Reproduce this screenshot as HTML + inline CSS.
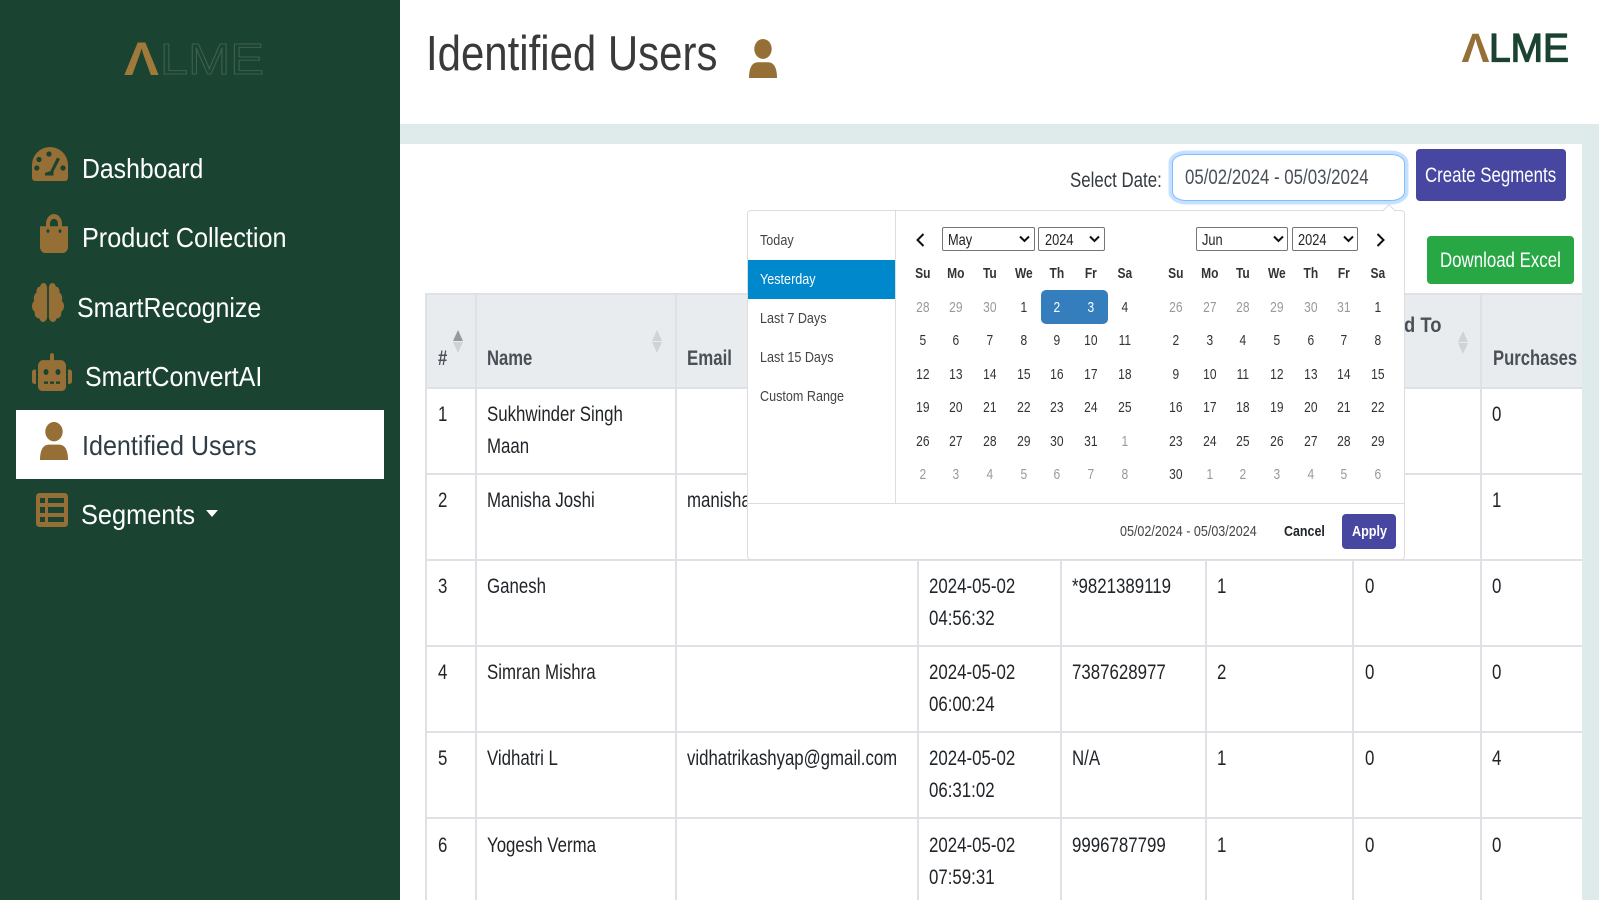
<!DOCTYPE html>
<html><head><meta charset="utf-8"><title>Identified Users</title>
<style>
html,body{margin:0;padding:0;background:#fff;width:1600px;height:900px;overflow:hidden}
body{position:relative;font-family:"Liberation Sans",sans-serif}
.a{position:absolute}
.t{position:absolute;white-space:nowrap;transform-origin:0 0;transform:scaleX(.79);font-size:21.33px;line-height:21.33px;color:#212529}
.h{font-weight:bold;color:#495057;transform:scaleX(.78)}
.s{font-size:28px;line-height:28px;color:#fff;font-weight:normal}
.r{font-size:15px;line-height:15px;color:#444;transform:scaleX(.84)}
.l{background:#dee2e6;position:absolute}
.cal{position:absolute;display:grid;grid-template-columns:repeat(7,33.7px);grid-auto-rows:33.5px;font-size:15px;line-height:33.5px;color:#333;text-align:center}
.cal span{display:block;transform:scaleX(.8)}
.cal b{display:block;transform:scaleX(.8);color:#333}
.cal .o{color:#999}
.cal .w{color:#fff}
.sel{position:absolute;box-sizing:border-box;background:#fff;border:1px solid #767676;border-radius:2px;height:24px;top:227px}
svg{position:absolute;display:block}
</style></head><body>

<!-- sidebar -->
<div class="a" style="left:0;top:0;width:400px;height:900px;background:#1b4332"></div>
<svg style="left:120px;top:36px" width="150" height="44" viewBox="0 0 150 44">
<text x="4" y="39" font-family="Liberation Sans" font-size="47" font-weight="bold" fill="#a07a3a" textLength="35" lengthAdjust="spacingAndGlyphs">Λ</text>
<text x="40" y="38" font-family="Liberation Sans" font-size="44" fill="none" stroke="#3d5f50" stroke-width="1" textLength="104" lengthAdjust="spacingAndGlyphs">LME</text>
</svg>

<svg style="left:32px;top:147px" width="36" height="34" viewBox="0 0 36 34"><path fill="#956f35" d="M0 18A18 18 0 0 1 36 18V30Q36 34 33 34H3Q0 34 0 30Z"/><g fill="#1b4332"><circle cx="17" cy="7" r="2.600"/><circle cx="7" cy="12.500" r="2.600"/><circle cx="4.800" cy="21" r="2.600"/><circle cx="31" cy="21" r="2.600"/><path d="M25 10.500L28 12L21.500 24.500V28.500H13V26L18.500 24Z"/></g></svg>
<svg style="left:40px;top:214px" width="28" height="39" viewBox="0 0 448 512" preserveAspectRatio="none"><path fill="#956f35" d="M352 160v-32C352 57.42 294.579 0 224 0 153.42 0 96 57.42 96 128v32H0v272c0 44.183 35.817 80 80 80h288c44.183 0 80-35.817 80-80V160h-96zm-192-32c0-35.29 28.71-64 64-64s64 28.71 64 64v32H160v-32zm160 120c-13.255 0-24-10.745-24-24s10.745-24 24-24 24 10.745 24 24-10.745 24-24 24zm-192 0c-13.255 0-24-10.745-24-24s10.745-24 24-24 24 10.745 24 24-10.745 24-24 24z"/></svg>
<svg style="left:32px;top:283px" width="32" height="39" viewBox="0 0 576 512" preserveAspectRatio="none"><path fill="#956f35" d="M208 0c-29.9 0-54.7 20.5-61.8 48.2-.8 0-1.4-.2-2.2-.2-35.3 0-64 28.7-64 64 0 4.8.6 9.5 1.7 14C52.5 138 32 166.6 32 200c0 12.6 3.2 24.3 8.3 34.9C16.3 248.7 0 274.3 0 304c0 33.3 20.4 61.9 49.4 73.9-.9 4.6-1.4 9.3-1.4 14.1 0 39.8 32.2 72 72 72 4.1 0 8.1-.5 12-1.2 9.6 28.5 36.2 49.2 68 49.2 39.8 0 72-32.2 72-72V64c0-35.3-28.7-64-64-64zm368 304c0-29.7-16.3-55.3-40.3-69.1 5.2-10.6 8.3-22.3 8.3-34.9 0-33.4-20.5-62-49.7-74 1-4.5 1.7-9.2 1.7-14 0-35.3-28.7-64-64-64-.8 0-1.5.2-2.2.2C422.7 20.5 397.9 0 368 0c-35.3 0-64 28.6-64 64v376c0 39.8 32.2 72 72 72 31.8 0 58.4-20.7 68-49.2 3.9.7 7.9 1.2 12 1.2 39.8 0 72-32.2 72-72 0-4.8-.5-9.5-1.4-14.1 29-12 49.4-40.6 49.4-73.9z"/></svg>
<svg style="left:32px;top:353px" width="40" height="38" viewBox="0 0 640 512" preserveAspectRatio="none"><path fill="#956f35" d="M32,224H64V416H32A31.96166,31.96166,0,0,1,0,384V256A31.96166,31.96166,0,0,1,32,224Zm512-48V448a64.06328,64.06328,0,0,1-64,64H160a64.06328,64.06328,0,0,1-64-64V176a79.974,79.974,0,0,1,80-80H288V32a32,32,0,0,1,64,0V96H464A79.974,79.974,0,0,1,544,176ZM264,256a40,40,0,1,0-40,40A39.997,39.997,0,0,0,264,256Zm-8,128H192v32h64Zm96,0H288v32h64ZM456,256a40,40,0,1,0-40,40A39.997,39.997,0,0,0,456,256Zm-8,128H384v32h64ZM640,256V384a31.96166,31.96166,0,0,1-32,32H576V224h32A31.96166,31.96166,0,0,1,640,256Z"/></svg>

<div class="a" style="left:16px;top:409.5px;width:368px;height:69.5px;background:#fff"></div>
<svg style="left:40px;top:422px" width="28" height="38" viewBox="0 0 28 38"><ellipse cx="14" cy="9.7" rx="8.7" ry="9.7" fill="#956f35"/><path fill="#956f35" d="M0 38C0 30 2 22.6 9 22.6H19C26 22.6 28 30 28 38Z"/></svg>
<svg style="left:36px;top:493px" width="32" height="34" viewBox="0 0 32 34"><path fill="#956f35" fill-rule="evenodd" d="M3.5 0H28.500A3.500 3.500 0 0 1 32 3.500V30.500A3.500 3.500 0 0 1 28.500 34H3.500A3.500 3.500 0 0 1 0 30.500V3.500A3.500 3.500 0 0 1 3.500 0ZM4 5V10H9V5ZM12 5V10H28V5ZM4 14V20H9V14ZM12 14V20H28V14ZM4 24V29H9V24ZM12 24V29H28V24Z"/></svg>

<div class="t s" style="left:82px;top:154.500px;transform:scaleX(.885)">Dashboard</div>
<div class="t s" style="left:82px;top:224px;transform:scaleX(.9)">Product Collection</div>
<div class="t s" style="left:77px;top:293.500px;transform:scaleX(.89)">SmartRecognize</div>
<div class="t s" style="left:85px;top:363px;transform:scaleX(.89)">SmartConvertAI</div>
<div class="t s" style="left:82px;top:431.500px;transform:scaleX(.897);color:#2f3e46">Identified Users</div>
<div class="t s" style="left:81px;top:500.500px;transform:scaleX(.905)">Segments</div>
<svg style="left:206px;top:510px" width="12" height="7" viewBox="0 0 12 7"><path fill="#fff" d="M0 0H12L6 7Z"/></svg>

<!-- header -->
<div class="t" style="left:426px;top:30px;font-size:49px;line-height:49px;color:#3a3a3a;transform:scaleX(.856)">Identified Users</div>
<svg style="left:749px;top:38.500px" width="28" height="39" viewBox="0 0 28 38" preserveAspectRatio="none"><ellipse cx="14" cy="9.7" rx="8.700" ry="9.700" fill="#956f35"/><path fill="#956f35" d="M0 38C0 30 2 22.600 9 22.600H19C26 22.600 28 30 28 38Z"/></svg>
<svg style="left:1460px;top:28px" width="122" height="38" viewBox="0 0 122 38">
<text x="1.500" y="34" font-family="Liberation Sans" font-size="41" font-weight="bold" fill="#956f35" textLength="28" lengthAdjust="spacingAndGlyphs">Λ</text>
<text x="29" y="33.500" font-family="Liberation Sans" font-size="40" fill="#1b4332" stroke="#1b4332" stroke-width="1.300" textLength="80" lengthAdjust="spacingAndGlyphs">LME</text>
</svg>

<!-- background bands -->
<div class="a" style="left:400px;top:124px;width:1199px;height:20px;background:#deebea"></div>
<div class="a" style="left:1582px;top:124px;width:17px;height:776px;background:#deebea"></div>

<!-- toolbar -->
<div class="t" style="left:1070px;top:170px;color:#343a40">Select Date:</div>
<div class="a" style="left:1172px;top:154px;width:233px;height:47px;box-sizing:border-box;border:1px solid #80bdff;border-radius:14px/9px;box-shadow:0 0 0 3.500px #c6e1ff;background:#fff"></div>
<div class="t" style="left:1185px;top:167px;color:#495057">05/02/2024 - 05/03/2024</div>
<div class="a" style="left:1415.500px;top:149px;width:150px;height:52px;background:#4747a1;border-radius:4px"></div>
<div class="t" style="left:1425px;top:165px;color:#fff">Create Segments</div>
<div class="a" style="left:1426.500px;top:236px;width:147.500px;height:47.500px;background:#28a745;border-radius:4px"></div>
<div class="t" style="left:1439.500px;top:250px;color:#fff">Download Excel</div>

<!-- table -->
<div class="a" style="left:425px;top:293px;width:1157px;height:95px;background:#e9ecef"></div>
<div class="l" style="left:425px;top:293px;width:1157px;height:2px"></div>
<div class="l" style="left:425px;top:386.500px;width:1157px;height:2px"></div>
<div class="l" style="left:425px;top:472.500px;width:1157px;height:2px"></div>
<div class="l" style="left:425px;top:558.500px;width:1157px;height:2px"></div>
<div class="l" style="left:425px;top:644.500px;width:1157px;height:2px"></div>
<div class="l" style="left:425px;top:730.500px;width:1157px;height:2px"></div>
<div class="l" style="left:425px;top:816.500px;width:1157px;height:2px"></div>
<div class="l" style="left:425px;top:293px;width:2px;height:607px"></div>
<div class="l" style="left:475px;top:293px;width:2px;height:607px"></div>
<div class="l" style="left:675px;top:293px;width:2px;height:607px"></div>
<div class="l" style="left:917px;top:293px;width:2px;height:607px"></div>
<div class="l" style="left:1060px;top:293px;width:2px;height:607px"></div>
<div class="l" style="left:1205px;top:293px;width:2px;height:607px"></div>
<div class="l" style="left:1352px;top:293px;width:2px;height:607px"></div>
<div class="l" style="left:1480px;top:293px;width:2px;height:607px"></div>

<svg style="left:453px;top:330px" width="10" height="23" viewBox="0 0 10 23"><path fill="#95989c" d="M5 0L10 11H0Z"/><path fill="#cfd2d6" d="M0 12H10L5 23Z"/></svg>
<svg style="left:652px;top:330px" width="10" height="23" viewBox="0 0 10 23"><path fill="#cfd2d6" d="M5 0L10 11H0Z"/><path fill="#cfd2d6" d="M0 12H10L5 23Z"/></svg>
<svg style="left:1458px;top:331px" width="10" height="23" viewBox="0 0 10 23"><path fill="#cfd2d6" d="M5 0L10 11H0Z"/><path fill="#cfd2d6" d="M0 12H10L5 23Z"/></svg>

<div class="t h" style="left:438px;top:348px">#</div>
<div class="t h" style="left:487px;top:348px">Name</div>
<div class="t h" style="left:687px;top:348px;transform:scaleX(.79)">Email</div>
<div class="t h" style="right:159px;top:315px;transform-origin:100% 0;transform:scaleX(.86)">Assigned To</div>
<div class="t h" style="left:1493px;top:348px">Purchases</div>

<div class="t" style="left:438px;top:404px">1</div>
<div class="t" style="left:487px;top:404px">Sukhwinder Singh</div>
<div class="t" style="left:487px;top:436px">Maan</div>
<div class="t" style="left:1492px;top:404px">0</div>

<div class="t" style="left:438px;top:490px">2</div>
<div class="t" style="left:487px;top:490px">Manisha Joshi</div>
<div class="t" style="left:687px;top:490px">manisha</div>
<div class="t" style="left:1492px;top:490px">1</div>

<div class="t" style="left:438px;top:576px">3</div>
<div class="t" style="left:487px;top:576px">Ganesh</div>
<div class="t" style="left:929px;top:576px">2024-05-02</div>
<div class="t" style="left:929px;top:608px">04:56:32</div>
<div class="t" style="left:1072px;top:576px">*9821389119</div>
<div class="t" style="left:1217px;top:576px">1</div>
<div class="t" style="left:1365px;top:576px">0</div>
<div class="t" style="left:1492px;top:576px">0</div>

<div class="t" style="left:438px;top:662px">4</div>
<div class="t" style="left:487px;top:662px">Simran Mishra</div>
<div class="t" style="left:929px;top:662px">2024-05-02</div>
<div class="t" style="left:929px;top:694px">06:00:24</div>
<div class="t" style="left:1072px;top:662px">7387628977</div>
<div class="t" style="left:1217px;top:662px">2</div>
<div class="t" style="left:1365px;top:662px">0</div>
<div class="t" style="left:1492px;top:662px">0</div>

<div class="t" style="left:438px;top:748px">5</div>
<div class="t" style="left:487px;top:748px">Vidhatri L</div>
<div class="t" style="left:687px;top:748px;transform:scaleX(.787)">vidhatrikashyap@gmail.com</div>
<div class="t" style="left:929px;top:748px">2024-05-02</div>
<div class="t" style="left:929px;top:780px">06:31:02</div>
<div class="t" style="left:1072px;top:748px">N/A</div>
<div class="t" style="left:1217px;top:748px">1</div>
<div class="t" style="left:1365px;top:748px">0</div>
<div class="t" style="left:1492px;top:748px">4</div>

<div class="t" style="left:438px;top:835px">6</div>
<div class="t" style="left:487px;top:835px">Yogesh Verma</div>
<div class="t" style="left:929px;top:835px">2024-05-02</div>
<div class="t" style="left:929px;top:867px">07:59:31</div>
<div class="t" style="left:1072px;top:835px">9996787799</div>
<div class="t" style="left:1217px;top:835px">1</div>
<div class="t" style="left:1365px;top:835px">0</div>
<div class="t" style="left:1492px;top:835px">0</div>

<!-- date picker -->
<div class="a" style="left:747px;top:210px;width:658px;height:349.500px;box-sizing:border-box;background:#fff;border:1px solid #ddd;border-radius:4px"></div>
<div class="a" style="left:1384px;top:206px;width:9px;height:9px;background:#fff;border-left:1px solid #ddd;border-top:1px solid #ddd;transform:rotate(45deg)"></div>
<div class="a" style="left:895px;top:211px;width:1px;height:292px;background:#ddd"></div>
<div class="a" style="left:748px;top:503px;width:656px;height:1px;background:#ddd"></div>
<div class="a" style="left:748px;top:260px;width:147px;height:39px;background:#0088cc"></div>

<div class="t r" style="left:760px;top:233px">Today</div>
<div class="t r" style="left:760px;top:272px;color:#fff">Yesterday</div>
<div class="t r" style="left:760px;top:311px">Last 7 Days</div>
<div class="t r" style="left:760px;top:350px">Last 15 Days</div>
<div class="t r" style="left:760px;top:388.500px">Custom Range</div>

<svg style="left:914px;top:232px" width="12" height="16" viewBox="0 0 12 16"><path d="M9.500 2L3.500 8L9.500 14" fill="none" stroke="#111" stroke-width="2"/></svg>
<svg style="left:1375px;top:232px" width="12" height="16" viewBox="0 0 12 16"><path d="M2.500 2L8.500 8L2.500 14" fill="none" stroke="#111" stroke-width="2"/></svg>

<div class="sel" style="left:942px;width:93px"></div>
<div class="sel" style="left:1038px;width:67px"></div>
<div class="sel" style="left:1196px;width:92px"></div>
<div class="sel" style="left:1291.500px;width:66.500px"></div>
<div class="t" style="left:948px;top:233px;font-size:16px;line-height:16px;color:#222;transform:scaleX(.8)">May</div>
<div class="t" style="left:1044.500px;top:233px;font-size:16px;line-height:16px;color:#222;transform:scaleX(.8)">2024</div>
<div class="t" style="left:1201.500px;top:233px;font-size:16px;line-height:16px;color:#222;transform:scaleX(.8)">Jun</div>
<div class="t" style="left:1298px;top:233px;font-size:16px;line-height:16px;color:#222;transform:scaleX(.8)">2024</div>
<svg style="left:1019px;top:235px" width="11" height="8" viewBox="0 0 11 8"><path d="M1 1.500L5.500 6L10 1.500" fill="none" stroke="#111" stroke-width="2"/></svg>
<svg style="left:1089px;top:235px" width="11" height="8" viewBox="0 0 11 8"><path d="M1 1.500L5.500 6L10 1.500" fill="none" stroke="#111" stroke-width="2"/></svg>
<svg style="left:1273px;top:235px" width="11" height="8" viewBox="0 0 11 8"><path d="M1 1.500L5.500 6L10 1.500" fill="none" stroke="#111" stroke-width="2"/></svg>
<svg style="left:1343px;top:235px" width="11" height="8" viewBox="0 0 11 8"><path d="M1 1.500L5.500 6L10 1.500" fill="none" stroke="#111" stroke-width="2"/></svg>

<div class="a" style="left:1040.500px;top:290.300px;width:67.500px;height:33.500px;background:#357ebd;border-radius:5px"></div>

<div class="cal" style="left:905.500px;top:257.200px">
<b>Su</b><b>Mo</b><b>Tu</b><b>We</b><b>Th</b><b>Fr</b><b>Sa</b>
<span class="o">28</span><span class="o">29</span><span class="o">30</span><span>1</span><span class="w">2</span><span class="w">3</span><span>4</span>
<span>5</span><span>6</span><span>7</span><span>8</span><span>9</span><span>10</span><span>11</span>
<span>12</span><span>13</span><span>14</span><span>15</span><span>16</span><span>17</span><span>18</span>
<span>19</span><span>20</span><span>21</span><span>22</span><span>23</span><span>24</span><span>25</span>
<span>26</span><span>27</span><span>28</span><span>29</span><span>30</span><span>31</span><span class="o">1</span>
<span class="o">2</span><span class="o">3</span><span class="o">4</span><span class="o">5</span><span class="o">6</span><span class="o">7</span><span class="o">8</span>
</div>
<div class="cal" style="left:1159px;top:257.200px">
<b>Su</b><b>Mo</b><b>Tu</b><b>We</b><b>Th</b><b>Fr</b><b>Sa</b>
<span class="o">26</span><span class="o">27</span><span class="o">28</span><span class="o">29</span><span class="o">30</span><span class="o">31</span><span>1</span>
<span>2</span><span>3</span><span>4</span><span>5</span><span>6</span><span>7</span><span>8</span>
<span>9</span><span>10</span><span>11</span><span>12</span><span>13</span><span>14</span><span>15</span>
<span>16</span><span>17</span><span>18</span><span>19</span><span>20</span><span>21</span><span>22</span>
<span>23</span><span>24</span><span>25</span><span>26</span><span>27</span><span>28</span><span>29</span>
<span>30</span><span class="o">1</span><span class="o">2</span><span class="o">3</span><span class="o">4</span><span class="o">5</span><span class="o">6</span>
</div>

<div class="t r" style="left:1119.500px;top:523.500px;transform:scaleX(.836)">05/02/2024 - 05/03/2024</div>
<div class="t r" style="left:1284px;top:523.500px;font-weight:bold;color:#212529;transform:scaleX(.83)">Cancel</div>
<div class="a" style="left:1342.300px;top:514px;width:53.700px;height:35px;background:#4747a1;border-radius:4px"></div>
<div class="t r" style="left:1352px;top:523.500px;font-weight:bold;color:#fff;transform:scaleX(.84)">Apply</div>

<div class="a" style="left:1599px;top:0;width:1px;height:900px;background:#fff"></div>
</body></html>
